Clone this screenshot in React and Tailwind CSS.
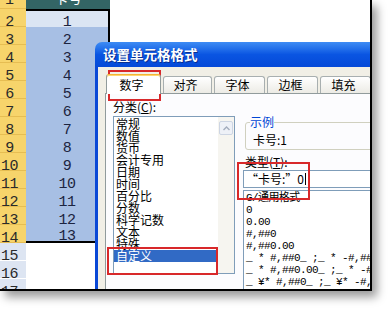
const mono = "font-['Liberation_Mono','Noto_Sans_CJK_SC',monospace]";
const cjk = "font-['Noto_Sans_CJK_SC',sans-serif]";

const categories = [
  "常规",
  "数值",
  "货币",
  "会计专用",
  "日期",
  "时间",
  "百分比",
  "分数",
  "科学记数",
  "文本",
  "特殊",
  "自定义",
];

const formats = [
  "G/通用格式",
  "0",
  "0.00",
  "#,##0",
  "#,##0.00",
  '_ * #,##0_ ;_ * -#,##0_ ;_ * "-"_ ;_ @_ ',
  '_ * #,##0.00_ ;_ * -#,##0.00_ ;_ * "-"??_ ;_ @_ ',
  '_ ¥* #,##0_ ;_ ¥* -#,##0_ ;_ ¥* "-"_ ;_ @_ ',
  '_ ¥* #,##0.00_ ;_ ¥* -#,##0.00_ ;_ ¥* "-"??_ ;_ @_ ',
];

const tabs = [
  { label: "数字", w: "w-[55px]", active: true },
  { label: "对齐", w: "w-[49px]" },
  { label: "字体", w: "w-[51px]" },
  { label: "边框", w: "w-[51px]" },
  { label: "填充", w: "w-[51px]" },
];

const RowHead = ({ n, light }) => (
  <div
    className={
      light
        ? `h-[18px] border-b border-white bg-[#dde5f2] pr-[7px] pt-[6px] text-center text-[15px] leading-[15px] tracking-[-0.5px] text-[#2a2a2a] ${mono}`
        : `h-[18px] border-b border-[#e6bd52] bg-[#f7d46b] pr-[7px] pt-[6px] text-center text-[15px] leading-[15px] tracking-[-0.5px] text-[#2a2a2a] ${mono}`
    }
  >
    {n}
  </div>
);

const Sheet = () => {
  const selected = [];
  for (let i = 1; i <= 13; i++) selected.push(i);

  return (
    <div className="flex">
      <div className="flex w-[26px] flex-col">
        <div className="h-[9px] overflow-hidden border-b border-[#e6bd52] bg-[#f7d46b] pr-[7px] text-center">
          <div className={`-mt-[7px] text-[15px] leading-[15px] text-[#2a2a2a] ${mono}`}>1</div>
        </div>
        {selected.map((n) => (
          <RowHead key={n} n={n + 1} />
        ))}
        <RowHead n={15} light />
        <RowHead n={16} light />
        <RowHead n={17} light />
      </div>

      <div className="flex w-[84px] flex-col">
        <div className="h-[9px] overflow-hidden bg-[#336565] text-center">
          <div className={`-mt-[10px] text-[14px] leading-[15px] text-white ${cjk}`}>卡号</div>
        </div>
        <div className="flex flex-col border-b-2 border-r-2 border-t-2 border-black">
          {selected.map((n) => (
            <div
              key={n}
              className={
                n === 1
                  ? `h-[16px] bg-[#dbe5f3] pt-[4px] text-center text-[15px] leading-[15px] tracking-[-0.5px] text-[#1c2440] ${mono}`
                  : n === 13
                    ? `h-[16px] bg-[#a7bfe4] pt-[4px] text-center text-[15px] leading-[15px] tracking-[-0.5px] text-[#1c2440] ${mono}`
                    : `h-[18px] bg-[#a7bfe4] pt-[6px] text-center text-[15px] leading-[15px] tracking-[-0.5px] text-[#1c2440] ${mono}`
              }
            >
              {n}
            </div>
          ))}
        </div>
      </div>
    </div>
  );
};

const Dialog = () => (
  <div className={`absolute left-[95px] top-[42px] flex h-[260px] w-[300px] flex-col ${cjk}`}>
    <div className="flex h-[28px] items-center rounded-tl-[7px] bg-linear-to-b from-[#3e8cf4] via-[#0a55e2] to-[#0549d8] pl-[8px] text-[13.5px] font-bold text-white [text-shadow:1px_1px_0_#0a2f8f]">
      设置单元格格式
    </div>

    <div className="flex flex-1 flex-col border-l-[3px] border-[#0a48d6] bg-[#f1efe6] pl-[7px] pt-[7px]">
      {/* tabs */}
      <div className="relative z-10 flex h-[19px] items-end gap-[2px] pl-[1px]">
        {tabs.map((tab) =>
          tab.active ? (
            <div
              key={tab.label}
              className={`-mb-px flex h-[20px] shrink-0 ${tab.w} items-center justify-center rounded-t-[3px] border border-b-0 border-[#919b9c] border-t-[#f5b335] bg-white pr-[4px] text-[12px] text-black shadow-[inset_0_1px_0_#ffd770]`}
            >
              {tab.label}
            </div>
          ) : (
            <div
              key={tab.label}
              className={`flex h-[17px] shrink-0 ${tab.w} items-center justify-center rounded-t-[3px] border border-b-0 border-[#a8afb0] bg-linear-to-b from-white to-[#ecebe5] pr-[4px] text-[12px] text-black`}
            >
              {tab.label}
            </div>
          )
        )}
      </div>

      {/* panel */}
      <div className="flex min-h-0 flex-1 border border-[#919b9c] bg-[#fcfcfe]">
        <div className="ml-[7px] flex w-[122px] shrink-0 flex-col">
          <div className="mt-[7px] h-[12px] text-[12px] leading-[12px] text-black">
            分类(<span className="underline">C</span>):
          </div>
          <div className="mt-[3px] flex h-[158px] border border-[#7f9db9] bg-white">
            <div className="flex min-w-0 flex-1 flex-col pt-[1px]">
              {categories.map((c) => (
                <div
                  key={c}
                  className={
                    c === "自定义"
                      ? "h-[12px] bg-[#316ac5] pl-[2px] text-[12px] leading-[12px] text-white"
                      : "h-[12px] pl-[2px] text-[12px] leading-[12px] text-black"
                  }
                >
                  {c}
                </div>
              ))}
            </div>
            <div className="flex w-[16px] shrink-0 flex-col bg-[#f6f5f0] p-[1px]">
              <div className="mt-[3px] flex h-[14px] items-center justify-center rounded-[2px] border border-[#cdd5e3] bg-[#eef1f7]">
                <svg width="7" height="5" viewBox="0 0 7 5">
                  <path d="M0.5 4 L3.5 1 L6.5 4" fill="none" stroke="#a3acbd" strokeWidth="1.4" />
                </svg>
              </div>
            </div>
          </div>
        </div>

        <div className="ml-[8px] flex min-w-0 flex-1 flex-col">
          <fieldset className="ml-[2px] mt-[22px] min-w-0 rounded-[3px] border border-[#d0d0bf] px-[4px] pb-[3px] pt-[6px]">
            <legend className="text-[12px] leading-[12px] text-[#0046d5]">示例</legend>
            <div className="pl-[3px] text-[12px] leading-[12px] text-black">卡号:1</div>
          </fieldset>
          <div className="ml-[2px] mt-[6px] h-[12px] text-[12px] leading-[12px] text-black">
            类型(<span className="underline">T</span>):
          </div>
          <div className="mt-[2px] flex h-[18px] items-center border border-[#7f9db9] bg-white pl-[2px] text-[12px] leading-[12px] text-black">
            “卡号:”0
            <span className="ml-[1px] inline-block h-[12px] w-px bg-black" />
          </div>
          <div className="mt-[2px] flex min-h-0 flex-1 flex-col overflow-hidden border border-[#7f9db9] bg-white pl-[2px] pt-px">
            {formats.map((f) => (
              <div
                key={f}
                className={`h-[12px] shrink-0 whitespace-pre text-[11px] leading-[12px] tracking-[-0.6px] text-black ${mono}`}
              >
                {f}
              </div>
            ))}
          </div>
        </div>
      </div>
    </div>
  </div>
);

export default function App() {
  return (
    <div className="relative h-[312px] w-[392px] overflow-hidden bg-white">
      <div className="relative h-[291px] w-[372px] overflow-hidden border-b-2 border-r-2 border-black bg-white shadow-[5px_6px_9px_rgba(0,0,0,0.4)]">
        <Sheet />
        <Dialog />

        {/* red highlight boxes */}
        <div className="absolute left-[108px] top-[70px] h-[31px] w-[53px] border-2 border-[#d8282a]" />
        <div className="absolute left-[237px] top-[162px] h-[38px] w-[73px] border-2 border-[#d8282a]" />
        <div className="absolute left-[107px] top-[247px] h-[28px] w-[111px] border-2 border-[#d8282a]" />
      </div>
    </div>
  );
}
